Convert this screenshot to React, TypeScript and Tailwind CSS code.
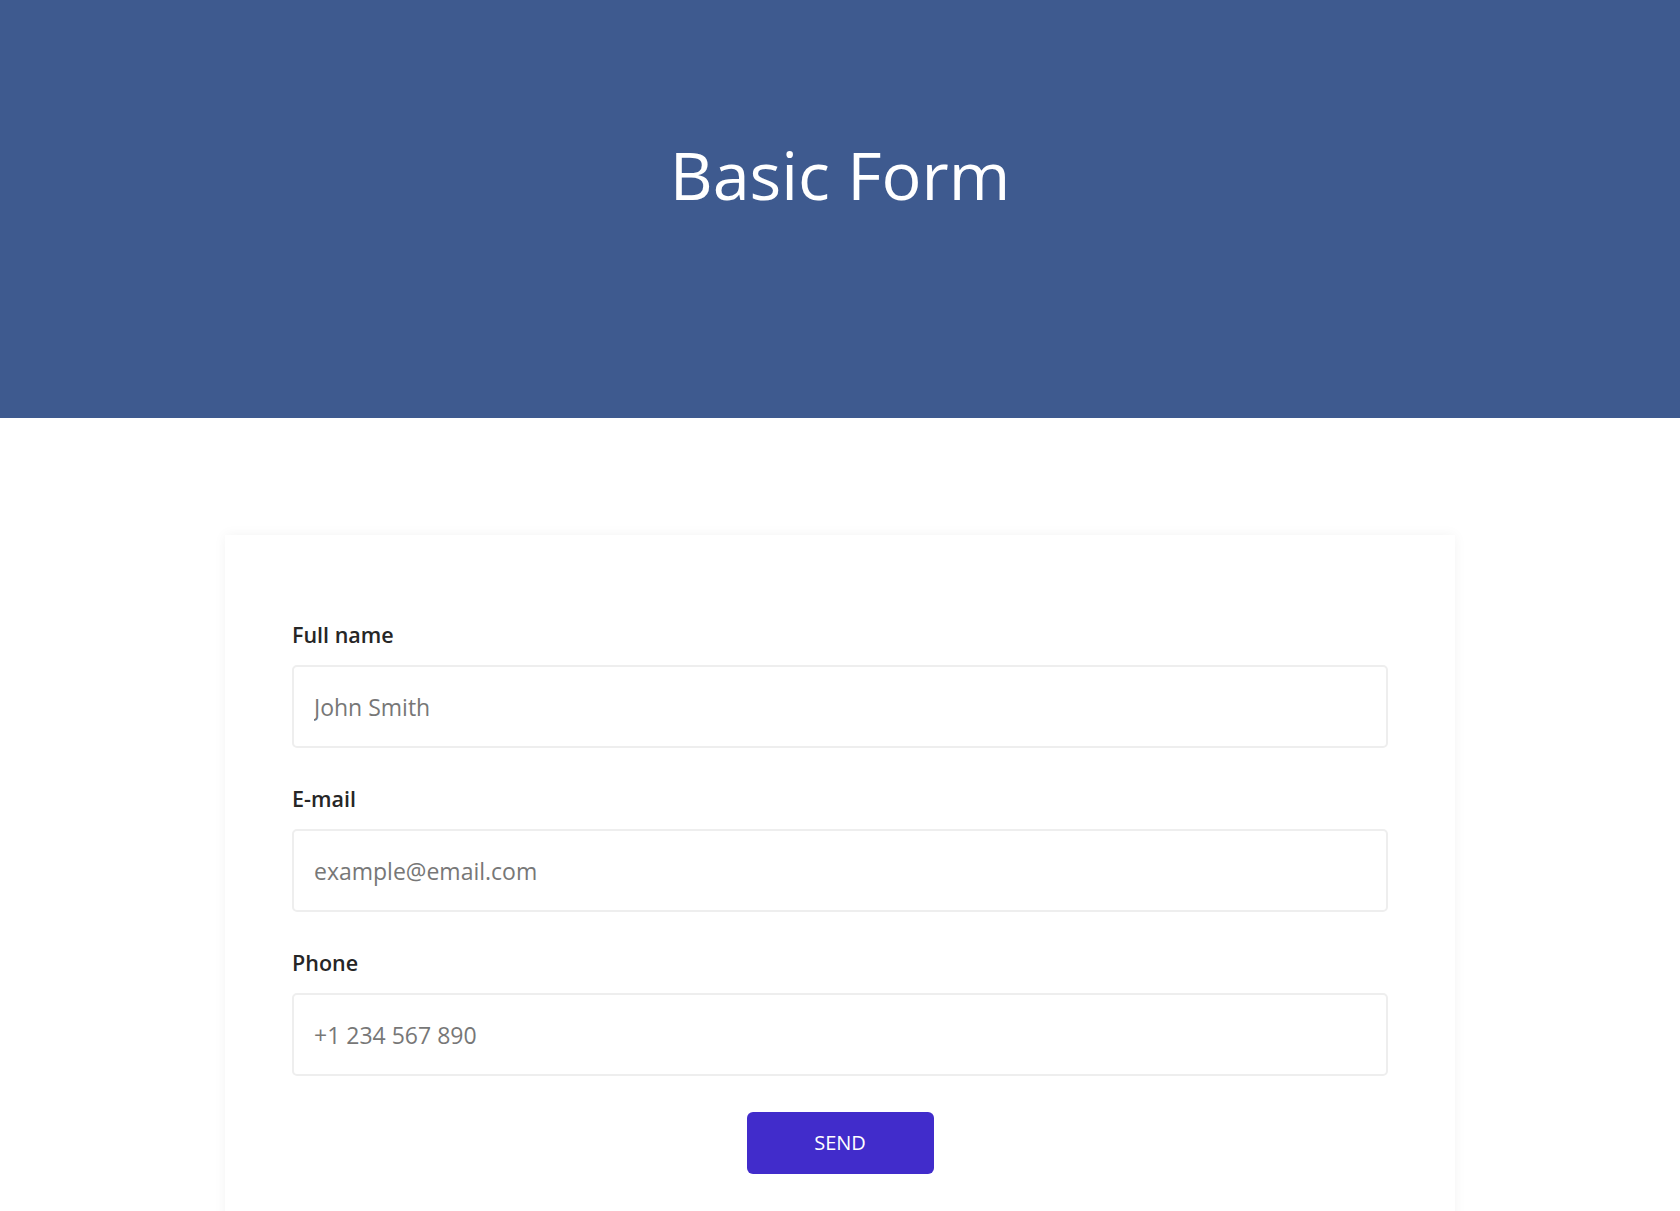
import React from 'react';

interface FieldProps {
  label: string;
  placeholder: string;
  type?: string;
}

const Field: React.FC<FieldProps> = ({ label, placeholder, type = 'text' }) => (
  <div className="flex flex-col">
    <label className="text-[21.5px] leading-[30px] font-semibold text-[#262626]">{label}</label>
    <input
      type={type}
      placeholder={placeholder}
      className="mt-[15px] h-[83px] w-full rounded-[5px] border-2 border-[#eeeeee] bg-white px-[20px] text-[23px] text-[#333] placeholder:text-[#777777] outline-none"
    />
  </div>
);

export default function App() {
  return (
    <div className="min-h-screen w-full bg-white font-['Open_Sans',sans-serif]">
      <header className="flex h-[418px] justify-center bg-[#3e5a8f] pt-[126px]">
        <h1 className="text-[66.5px] leading-[96px] font-normal text-white">Basic Form</h1>
      </header>

      <main className="flex justify-center pt-[117px]">
        <div className="w-[1230px] bg-white px-[67px] pt-[85px] pb-[80px] shadow-[0_0_12px_rgba(0,0,0,0.05)]">
          <form className="flex flex-col gap-[36px]" onSubmit={(e) => e.preventDefault()}>
            <Field label="Full name" placeholder="John Smith" />
            <Field label="E-mail" placeholder="example@email.com" type="email" />
            <Field label="Phone" placeholder="+1 234 567 890" type="tel" />
            <div className="flex justify-center">
              <button
                type="submit"
                className="h-[62px] w-[187px] rounded-[6px] bg-[#412ccb] text-[20px] text-white"
              >
                SEND
              </button>
            </div>
          </form>
        </div>
      </main>
    </div>
  );
}
